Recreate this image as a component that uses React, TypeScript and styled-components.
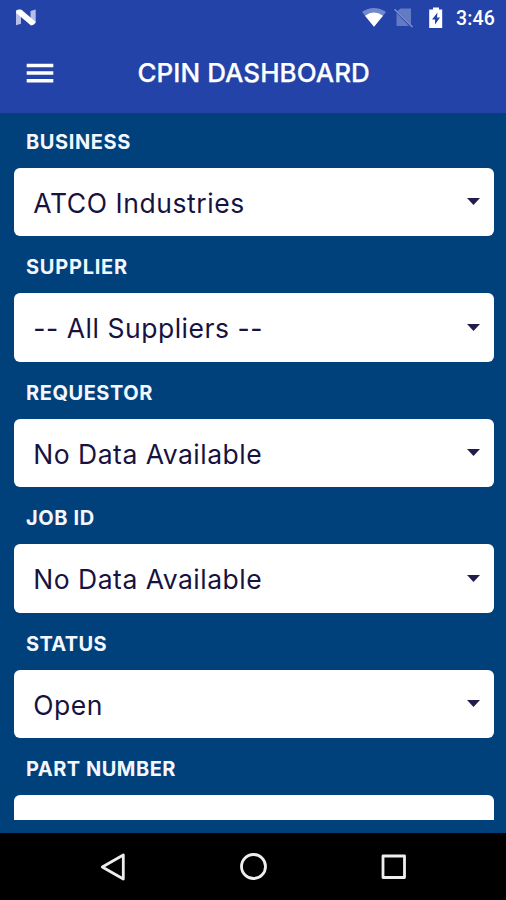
import React from "react";
import styled, { createGlobalStyle } from "styled-components";

const Global = createGlobalStyle`
  *, *::before, *::after { box-sizing: border-box; }
  body { margin: 0; background: #00417b; }
`;

const Screen = styled.div`
  width: 506px;
  height: 900px;
  display: flex;
  flex-direction: column;
  overflow: hidden;
  background: #00417b;
  font-family: Inter, "Liberation Sans", sans-serif;
`;

const Header = styled.header`
  height: 113px;
  flex: none;
  background: #2443a8;
  color: #fff;
`;

const StatusBar = styled.div`
  height: 36px;
  display: flex;
  align-items: center;
  padding: 0 10px 0 15px;
`;

const StatusIcons = styled.div`
  margin-left: auto;
  display: flex;
  align-items: center;
`;

const Clock = styled.span`
  width: 40px;
  margin-left: 12.5px;
  font: 500 19.5px/37px Roboto, sans-serif;
  letter-spacing: 0.15px;
  white-space: nowrap;
`;

const TitleBar = styled.div`
  height: 74px;
  display: grid;
  grid-template-columns: 137.5px 1fr;
  align-items: center;
`;

const MenuButton = styled.button`
  display: flex;
  padding: 0 0 0 26px;
  border: 0;
  background: none;
`;

const Title = styled.h1`
  margin: 0;
  font-size: 26px;
  line-height: 74px;
  font-weight: 550;
  -webkit-text-stroke: 0.25px #fff;
  letter-spacing: 0.04px;
  white-space: nowrap;
`;

const Form = styled.main`
  height: 707px;
  flex: none;
  overflow: hidden;
  display: flex;
  flex-direction: column;
  gap: 7px;
  padding: 4.5px 12.5px 0 13.5px;
`;

const Field = styled.div`
  flex: none;
`;

const Label = styled.div<{ $tracking: number }>`
  height: 50px;
  padding-left: 12.5px;
  font-size: 20px;
  line-height: 49.4px;
  font-weight: 700;
  letter-spacing: ${(p) => p.$tracking}px;
  color: #f4f7ff;
  white-space: nowrap;
`;

const Select = styled.div<{ $tracking: number }>`
  height: 68.6px;
  display: flex;
  align-items: center;
  justify-content: space-between;
  padding: 1.6px 14px 0 19.8px;
  border-radius: 6px;
  background: #fff;
  color: #17123f;
  font-size: 26.5px;
  letter-spacing: ${(p) => p.$tracking}px;
  white-space: nowrap;
`;

const Caret = styled.svg`
  display: block;
  margin-top: -2px;
`;

const NavBar = styled.nav`
  height: 67px;
  flex: none;
  margin-top: 13px;
  display: flex;
  justify-content: center;
  align-items: center;
  gap: 112px;
  background: #000;
`;

const Glyph = styled.svg`
  display: block;
  flex: none;
`;

const fields = [
  { label: "BUSINESS", value: "ATCO Industries", lt: 0.6, vt: 0.57 },
  { label: "SUPPLIER", value: "-- All Suppliers --", lt: 0.75, vt: 0.53 },
  { label: "REQUESTOR", value: "No Data Available", lt: 0.55, vt: 0.5 },
  { label: "JOB ID", value: "No Data Available", lt: 0.6, vt: 0.5 },
  { label: "STATUS", value: "Open", lt: 0.35, vt: 0.5 },
  { label: "PART NUMBER", value: "", lt: 0.5, vt: 0.5 },
];

export default function App() {
  return (
    <Screen>
      <Global />
      <Header>
        <StatusBar>
          <Glyph width="22" height="18" viewBox="0 0 22 18">
            <path d="M1 2 6 .7v14L1 16.200z M15.500 2 20.700 .5V14l-5.200 1.500z" fill="#b3bfe6" />
            <path d="M1.200 1.500Q3 .2 6.500 .8L20.500 12.800Q20.200 15.800 16 16.400L1.200 4z" fill="#fff" />
          </Glyph>
          <StatusIcons>
            <Glyph width="24" height="20" viewBox="0 0 24 20">
              <path d="M0 4Q12-4 24 4L12 18.800z" fill="#7188cc" />
              <path d="M3 7.700Q12 1.500 21 7.700L12 18.800z" fill="#fff" />
            </Glyph>
            <Glyph width="42" height="20" viewBox="0 0 42 20">
              <path d="M14.500 .5H25v16L11.500 3z M10.500 5 23 18H10.500z" fill="#637bc4" />
              <path d="M8.500 1.200 26.500 19" stroke="#7d91d0" strokeWidth="1.500" />
            </Glyph>
            <Glyph width="16" height="22" viewBox="0 0 16 22">
              <path d="M5 .5h6v2h3.200v18.500H1.200V2.500H5z" fill="#fff" />
              <path d="M9.500 5.500 4 12.500h3V17.500l5-7H9z" fill="#2443a8" />
            </Glyph>
            <Clock>3:46</Clock>
          </StatusIcons>
        </StatusBar>
        <TitleBar>
          <MenuButton aria-label="Menu">
            <Glyph width="28" height="20" viewBox="0 0 28 20">
              <path d="M.7 2.400h26.600M.7 10h26.600M.7 17.700h26.600" stroke="#fff" strokeWidth="3.500" />
            </Glyph>
          </MenuButton>
          <Title>CPIN DASHBOARD</Title>
        </TitleBar>
      </Header>
      <Form>
        {fields.map((f) => (
          <Field key={f.label}>
            <Label $tracking={f.lt}>{f.label}</Label>
            <Select $tracking={f.vt}>
              <span>{f.value}</span>
              <Caret width="13" height="7" viewBox="0 0 13 7">
                <path d="M0 0h13L6.500 7z" fill="#211c4d" />
              </Caret>
            </Select>
          </Field>
        ))}
      </Form>
      <NavBar>
        <Glyph width="28" height="28" viewBox="0 0 28 28" fill="none" stroke="#eee" strokeWidth="2.800" strokeLinejoin="round">
          <path d="M24.300 2v24L3.300 14z" />
        </Glyph>
        <Glyph width="28" height="28" viewBox="0 0 28 28" fill="none" stroke="#eee" strokeWidth="2.800">
          <circle cx="14.500" cy="13.500" r="12" />
        </Glyph>
        <Glyph width="28" height="28" viewBox="0 0 28 28" fill="none" stroke="#eee" strokeWidth="2.800" strokeLinejoin="round">
          <rect x="4" y="3" width="21.500" height="21.500" />
        </Glyph>
      </NavBar>
    </Screen>
  );
}
